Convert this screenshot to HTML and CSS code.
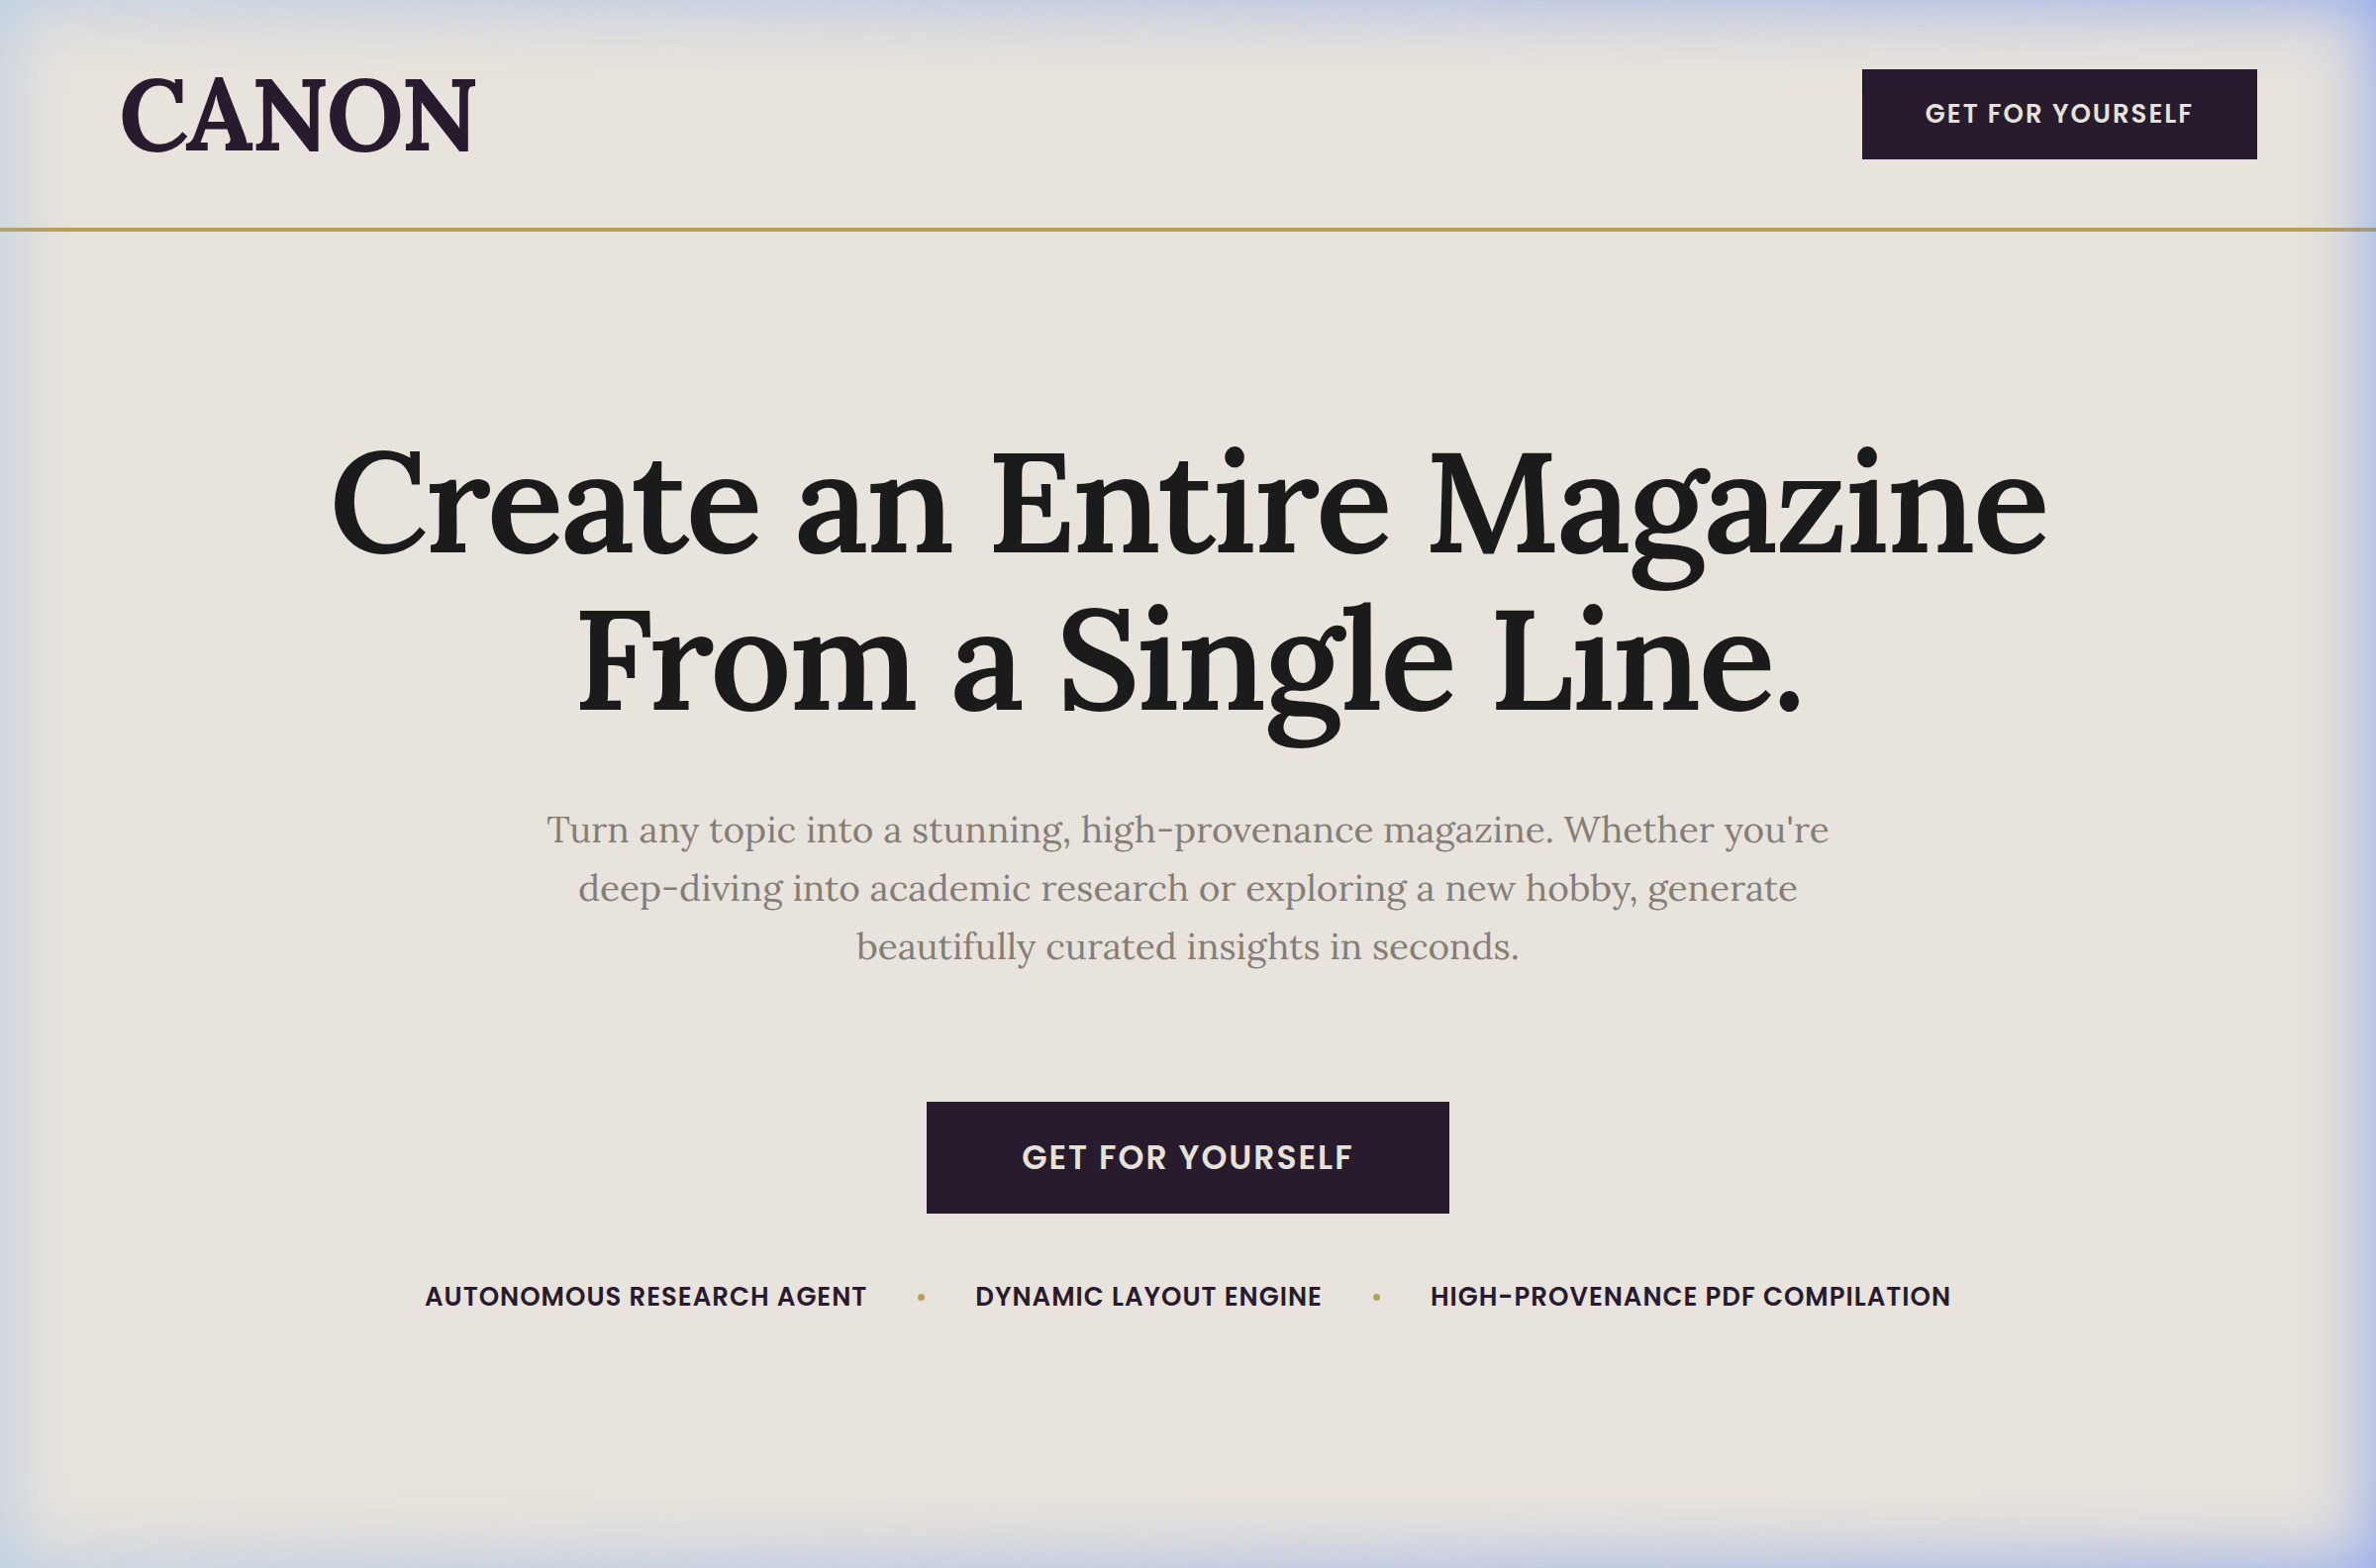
FILE: index.html
```html
<!DOCTYPE html>
<html lang="en">
<head>
    <meta charset="UTF-8">
    <meta name="viewport" content="width=device-width, initial-scale=1.0">
    <title>Canon</title>
    <link rel="stylesheet" href="styles.css">
</head>
<body>

    <header class="site-header">
        <a class="logo" href="/">CANON</a>
        <button class="btn btn-small" type="button">GET FOR YOURSELF</button>
    </header>

    <main class="hero">
        <h1>Create an Entire Magazine<br>From a Single Line.</h1>
        <p class="subtitle">
            Turn any topic into a stunning, high-provenance magazine. Whether you're<br>
            deep-diving into academic research or exploring a new hobby, generate<br>
            beautifully curated insights in seconds.
        </p>
        <button class="btn btn-large" type="button">GET FOR YOURSELF</button>
        <ul class="features">
            <li>AUTONOMOUS RESEARCH AGENT</li>
            <li>DYNAMIC LAYOUT ENGINE</li>
            <li>HIGH-PROVENANCE PDF COMPILATION</li>
        </ul>
    </main>

</body>
</html>
```
FILE: styles.css
```css
* {
    box-sizing: border-box;
}

body {
    margin: 0;
    min-height: 100vh;
    background: #e8e3dc;
    color: #1b1b1b;
    font-family: Lora, "Liberation Serif", serif;
}

/* Soft blue glow round the window, stronger towards the right */
body::before,
body::after {
    content: "";
    position: fixed;
    inset: 0;
    pointer-events: none;
}

body::before {
    box-shadow: inset 0 0 76px rgba(120, 176, 240, 0.46);
    mask-image: linear-gradient(to right, #000, transparent);
}

body::after {
    box-shadow: inset 0 0 76px rgba(100, 140, 244, 0.72);
    mask-image: linear-gradient(to right, transparent, #000);
}

.site-header {
    display: flex;
    justify-content: space-between;
    align-items: center;
    padding: 48px 120px;
    border-bottom: 4px solid #b8a055;
}

.logo {
    color: #281b2e;
    font-size: 102px;
    font-weight: 700;
    line-height: 134px;
    letter-spacing: -2px;
    text-decoration: none;
}

.btn {
    border: none;
    background: #281b2e;
    color: #e5e2d9;
    font-family: Poppins, Inter, sans-serif;
    font-weight: 600;
    letter-spacing: 2px;
    cursor: pointer;
}

.btn:hover {
    opacity: 0.9;
}

.btn-small {
    padding: 26px 64px;
    font-size: 26px;
    line-height: 39px;
}

.btn-large {
    padding: 32px 96px;
    font-size: 33px;
    line-height: 49px;
}

.hero {
    display: flex;
    flex-direction: column;
    align-items: center;
    padding: 192px 120px;
    text-align: center;
}

h1 {
    margin: 0 0 64px;
    font-size: 144px;
    font-weight: 600;
    line-height: 159px;
    letter-spacing: -3px;
}

.subtitle {
    margin: 0 0 128px;
    color: #857e76;
    font-size: 37px;
    line-height: 59px;
}

.features {
    display: flex;
    align-items: center;
    gap: 51px;
    margin: 64px 0 0;
    padding: 0;
    list-style: none;
    color: #281b2e;
    font-family: Poppins, Inter, sans-serif;
    font-size: 26px;
    font-weight: 600;
    line-height: 40px;
    letter-spacing: 1px;
}

.features li {
    display: flex;
    align-items: center;
    gap: 51px;
}

.features li + li::before {
    content: "";
    width: 7px;
    height: 7px;
    border-radius: 50%;
    background: #b8a055;
}
```
